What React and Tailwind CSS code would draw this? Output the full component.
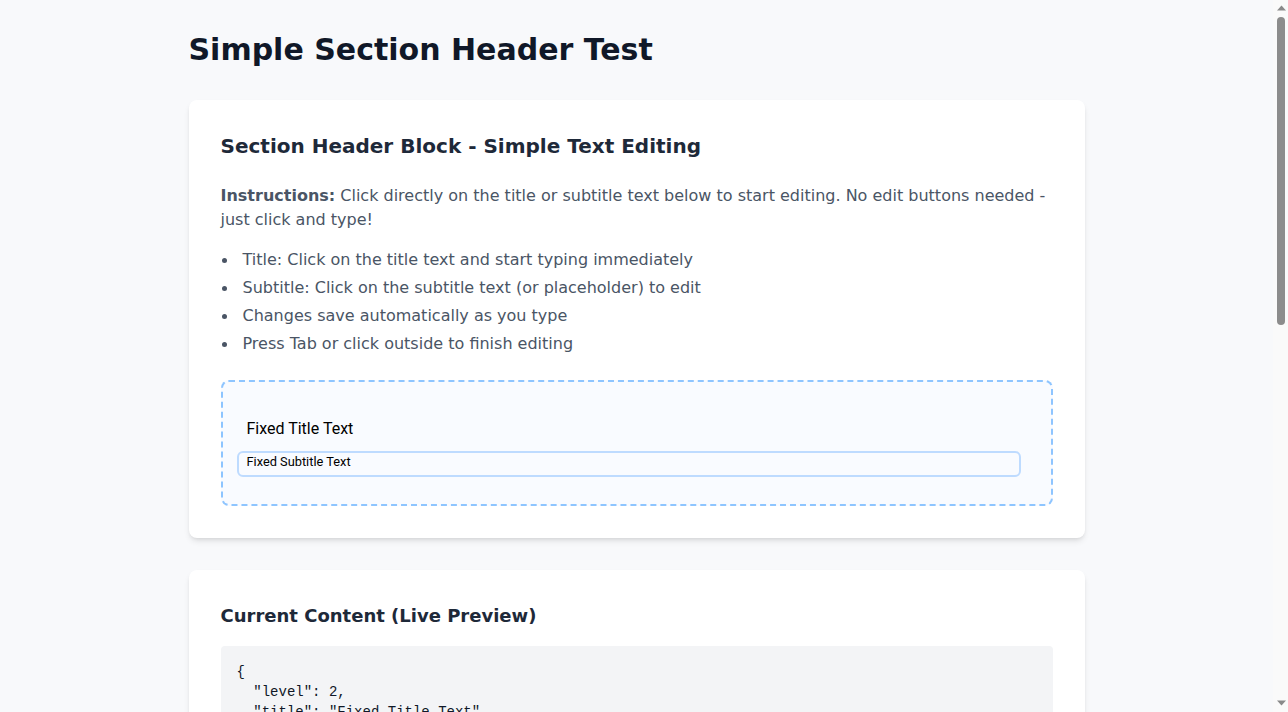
import { useState } from "react";

const steps = [
	"Title: Click on the title text and start typing immediately",
	"Subtitle: Click on the subtitle text (or placeholder) to edit",
	"Changes save automatically as you type",
	"Press Tab or click outside to finish editing",
];

const Bullet = ({ children }) => (
	<li className="flex">
		<span className="w-[22px] shrink-0 pt-[10px]">
			<span className="block w-[5px] h-[5px] ml-[1px] rounded-full bg-gray-600" />
		</span>
		<span>{children}</span>
	</li>
);

const Card = ({ title, children, className = "" }) => (
	<div className={`bg-white rounded-lg shadow-md p-8 ${className}`}>
		<h2 className="text-lg leading-7 font-semibold text-gray-800 mb-4">{title}</h2>
		{children}
	</div>
);

// page scroll gutter, as the browser draws it
const ScrollGutter = () => (
	<div className="w-[15px] h-screen shrink-0 bg-[#fafafa] flex flex-col items-center">
		<svg width="9" height="6" viewBox="0 0 9 6" className="mt-[5px] ml-[1px]">
			<path d="M0 5.5 L4.5 0.5 L9 5.5 Z" fill="#8a8a8a" />
		</svg>
		<div className="w-2 h-[308px] mt-[6px] ml-[1px] rounded-full bg-[#8c8c8c]" />
		<div className="flex-1" />
		<svg width="9" height="6" viewBox="0 0 9 6" className="mb-[6px] ml-[1px]">
			<path d="M0 0.5 L4.5 5.5 L9 0.5 Z" fill="#8a8a8a" />
		</svg>
	</div>
);

export default function App() {
	const [content] = useState({
		level: 2,
		title: "Fixed Title Text",
		subtitle: "Fixed Subtitle Text",
		alignment: "left",
		showDivider: false,
	});

	return (
		<div className="flex h-screen overflow-hidden bg-[#f8f9fb] font-['DejaVu_Sans',sans-serif]">
			<div className="flex-1 overflow-y-auto">
				<div className="max-w-4xl mx-auto py-8">
					<h1 className="text-3xl leading-9 font-bold text-gray-900 mb-8">
						Simple Section Header Test
					</h1>

					<div className="bg-white rounded-lg shadow-md p-8">
						<h2 className="text-xl leading-7 font-semibold text-gray-800 mb-6">
							Section Header Block - Simple Text Editing
						</h2>
						<p className="text-gray-600 leading-6 mb-4">
							<strong className="font-bold">Instructions:</strong> Click directly on the
							title or subtitle text below to start editing. No edit buttons needed - just
							click and type!
						</p>
						<ul className="text-gray-600 leading-6 space-y-1 mb-6">
							{steps.map((s) => (
								<Bullet key={s}>{s}</Bullet>
							))}
						</ul>

						<div className="border-2 border-dashed border-blue-300 rounded-lg bg-[#f9fbff] pl-[14px] pr-[30px] pt-[33px] pb-[27px] font-['Roboto',sans-serif]">
							<div className="pl-[10px] text-base leading-7 text-black mb-[8px]">
								{content.title}
							</div>
							<div className="border-2 border-blue-200 rounded-md px-2 pt-0 pb-[5px] text-[12.8px] leading-[17px] text-black">
								{content.subtitle}
							</div>
						</div>
					</div>

					<Card title="Current Content (Live Preview)" className="mt-8">
						<pre className="bg-gray-100 rounded p-4 text-sm leading-5 text-gray-900 font-['Liberation_Mono',monospace]">
							{JSON.stringify(content, null, 2)}
						</pre>
					</Card>

					<Card title="Expected Behavior" className="mt-8">
						<ul className="text-gray-600 leading-6 space-y-1">
							<Bullet>Clicking the title places the cursor in the text</Bullet>
							<Bullet>Typing updates the live preview instantly</Bullet>
							<Bullet>Empty subtitle shows a placeholder when not focused</Bullet>
							<Bullet>Focus ring appears around the field being edited</Bullet>
							<Bullet>No layout shift when switching between view and edit</Bullet>
						</ul>
					</Card>

					<Card title="Debug Log" className="mt-8">
						<div className="bg-gray-100 rounded p-4 h-64 text-sm leading-5 text-gray-500 font-['Liberation_Mono',monospace]">
							<div>[ready] Section header block mounted</div>
							<div>[info] Title field editable</div>
							<div>[info] Subtitle field editable</div>
						</div>
					</Card>
				</div>
			</div>
			<ScrollGutter />
		</div>
	);
}
